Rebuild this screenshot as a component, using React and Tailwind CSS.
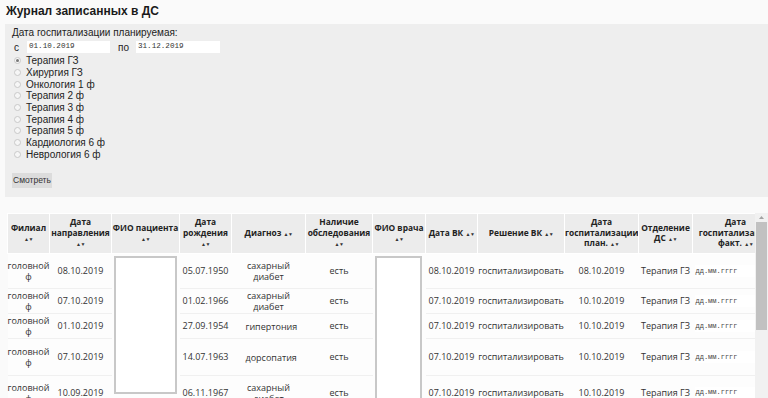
const departments = [
  'Терапия ГЗ', 'Хирургия ГЗ', 'Онкология 1 ф', 'Терапия 2 ф', 'Терапия 3 ф',
  'Терапия 4 ф', 'Терапия 5 ф', 'Кардиология 6 ф', 'Неврология 6 ф',
]

const headers = [
  { title: ['Филиал'], w: 42 },
  { title: ['Дата', 'направления'], w: 62 },
  { title: ['ФИО пациента'], w: 68 },
  { title: ['Дата', 'рождения'], w: 52 },
  { title: ['Диагноз'], w: 74, inline: true },
  { title: ['Наличие', 'обследования'], w: 67 },
  { title: ['ФИО врача'], w: 53 },
  { title: ['Дата ВК'], w: 52, inline: true },
  { title: ['Решение ВК'], w: 87, inline: true },
  { title: ['Дата', 'госпитализации', 'план.'], w: 74, inlineLast: true },
  { title: ['Отделение', 'ДС'], w: 54, inlineLast: true },
  { title: ['Дата', 'госпитализации', 'факт.'], w: 86, inlineLast: true },
]

const rows = [
  { h: 35, dir: '08.10.2019', born: '05.07.1950', diag: 'сахарный диабет', vk: '08.10.2019', plan: '08.10.2019' },
  { h: 25, dir: '07.10.2019', born: '01.02.1966', diag: 'сахарный диабет', vk: '07.10.2019', plan: '10.10.2019' },
  { h: 25, dir: '01.10.2019', born: '27.09.1954', diag: 'гипертония', vk: '07.10.2019', plan: '10.10.2019' },
  { h: 37, dir: '07.10.2019', born: '14.07.1963', diag: 'дорсопатия', vk: '07.10.2019', plan: '10.10.2019' },
  { h: 34, dir: '10.09.2019', born: '06.11.1967', diag: 'сахарный диабет', vk: '07.10.2019', plan: '10.10.2019' },
]

const Sort = () => <span className="text-[5px] tracking-[-0.5px] text-[#333]">▲▼</span>

function Radio({ checked, label }) {
  return (
    <div className="flex items-center h-[11.7px]">
      <span className="w-[7px] h-[7px] ml-[2px] rounded-full border border-[#c9c9c9] bg-[#f6f6f6] flex items-center justify-center">
        {checked && <span className="w-[3px] h-[3px] rounded-full bg-[#777]" />}
      </span>
      <span className="ml-[5px] text-[10px] text-[#222]">{label}</span>
    </div>
  )
}

function DateBox({ value, w }) {
  return (
    <div className="h-[12px] bg-white flex items-center pl-[2px] font-['Liberation_Mono',monospace] text-[7.6px] text-[#333]" style={{ width: w }}>
      {value}
    </div>
  )
}

export default function App() {
  return (
    <div className="h-[398px] overflow-hidden bg-[#fafafa] font-['Liberation_Sans',Arial,sans-serif]">
      <h1 className="h-[24px] pl-[6px] pt-[4px] text-[12px] font-bold text-[#1a1a1a] leading-[14px]">
        Журнал записанных в ДС
      </h1>

      <div className="ml-[5px] h-[173px] bg-[#eeeeee] pl-[7px] pt-[3px]">
        <div className="text-[10px] leading-[12px] text-[#222]">Дата госпитализации планируемая:</div>
        <div className="flex items-center mt-[2px] h-[12px] text-[10px] text-[#222]">
          <span className="ml-[2px] w-[13px]">с</span>
          <DateBox value="01.10.2019" w={83} />
          <span className="ml-[8px] w-[18px]">по</span>
          <DateBox value="31.12.2019" w={84} />
        </div>
        <div className="mt-[2px]">
          {departments.map((d, i) => <Radio key={d} checked={i === 0} label={d} />)}
        </div>
        <button className="mt-[13px] h-[15px] w-[40px] bg-[#dcdcdc] text-[8.5px] text-[#333] flex items-center justify-center">
          Смотреть
        </button>
      </div>

      <div className="mt-[16px] ml-[7px] flex h-[260px]">
        <div className="flex-1 overflow-hidden font-['Open_Sans',sans-serif] text-[9px] text-[#333]">
          <table className="table-fixed border-collapse w-[771px]">
            <colgroup>
              {headers.map((h, i) => <col key={i} style={{ width: h.w }} />)}
            </colgroup>
            <thead>
              <tr className="h-[40px]">
                {headers.map((h, i) => (
                  <th key={i} className="bg-[#ececec] border border-white font-bold text-[8.4px] text-[#222] text-center leading-[10.5px] px-0 whitespace-nowrap overflow-hidden">
                    {h.inline ? (
                      <span>{h.title[0]} <Sort /></span>
                    ) : h.inlineLast ? (
                      h.title.map((t, j) => (
                        <div key={j}>{t}{j === h.title.length - 1 && <> <Sort /></>}</div>
                      ))
                    ) : (
                      <>
                        {h.title.map((t, j) => <div key={j}>{t}</div>)}
                        <div><Sort /></div>
                      </>
                    )}
                  </th>
                ))}
              </tr>
            </thead>
            <tbody>
              {rows.map((r, i) => (
                <tr key={i} className="border-b border-[#f0f0f0] bg-[#fdfdfd]" style={{ height: r.h }}>
                  <td className="text-center leading-[11px]">головной<br />ф</td>
                  <td className="text-center">{r.dir}</td>
                  {i === 0 && (
                    <td rowSpan={rows.length} className="align-top pt-[2px] pl-[2px]">
                      <div className="w-[63px] h-[138px] bg-white border-2 border-[#c8c8c8]" />
                    </td>
                  )}
                  <td className="text-center">{r.born}</td>
                  <td className="text-center leading-[11px] px-[14px]">{r.diag}</td>
                  <td className="text-center">есть</td>
                  {i === 0 && (
                    <td rowSpan={rows.length} className="align-top pt-[2px] pl-[2px]">
                      <div className="w-[47px] h-[145px] bg-white border-2 border-[#c8c8c8]" />
                    </td>
                  )}
                  <td className="text-center whitespace-nowrap">{r.vk}</td>
                  <td className="text-center whitespace-nowrap">госпитализировать</td>
                  <td className="text-center">{r.plan}</td>
                  <td className="text-center whitespace-nowrap">Терапия ГЗ</td>
                  <td className="pl-[2px]">
                    <div className="h-[12px] w-[72px] bg-white flex items-center pl-[1px] font-['Liberation_Mono',monospace] text-[7px] text-[#444]">
                      дд.мм.гггг
                    </div>
                  </td>
                </tr>
              ))}
            </tbody>
          </table>
        </div>
        <div className="w-[13px] shrink-0 bg-[#f1f1f1] flex flex-col items-center">
          <div className="h-[9px] flex items-center justify-center">
            <svg width="5" height="3" viewBox="0 0 5 3"><path d="M0 3 L2.5 0 L5 3 Z" fill="#a3a3a3" /></svg>
          </div>
          <div className="w-[11px] h-[108px] bg-[#c1c1c1]" />
        </div>
      </div>
    </div>
  )
}
